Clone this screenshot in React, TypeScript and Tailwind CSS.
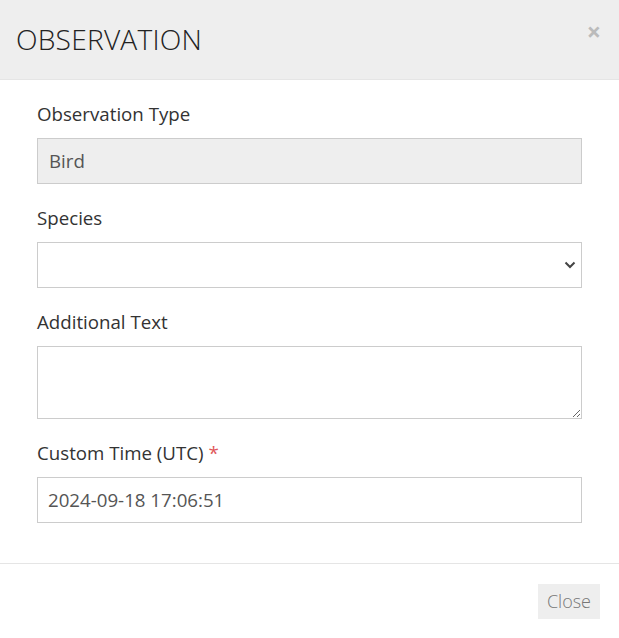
import React from "react";

const font = { fontFamily: '"Open Sans", "Liberation Sans", sans-serif' };

function Label({ children, required }: { children: React.ReactNode; required?: boolean }) {
  return (
    <label className="mb-[11px] block text-[18.7px] leading-[26px] text-[#333]">
      {children}
      {required && <span className="ml-[5px] text-[#e0575b]">*</span>}
    </label>
  );
}

export default function App() {
  return (
    <div className="h-[638px] w-[619px] bg-white text-[#333]" style={font}>
      <div className="flex h-[80px] items-start justify-between border-b border-[#e5e5e5] bg-[#eeeeee] pl-[16px] pr-[18px]">
        <h1 className="mt-[21px] text-[28.2px] font-light leading-[36px] tracking-[0.2px] text-[#222]">
          OBSERVATION
        </h1>
        <button className="mt-[17px] text-[25px] font-bold leading-[28px] text-[#bbbbbb]">×</button>
      </div>

      <div className="px-[37px] pb-[20px] pt-[21px]">
        <div className="mb-[21px]">
          <Label>Observation Type</Label>
          <div className="flex h-[46px] items-center border border-[#cccccc] bg-[#eeeeee] px-[11px] text-[18.7px] text-[#555]">
            Bird
          </div>
        </div>

        <div className="mb-[21px]">
          <Label>Species</Label>
          <div className="flex h-[46px] items-center justify-end border border-[#cccccc] bg-white pr-[5px]">
            <svg width="12" height="8" viewBox="0 0 12 8" fill="none">
              <path d="M1.5 1.5 L6 6 L10.5 1.5" stroke="#444" strokeWidth="2" />
            </svg>
          </div>
        </div>

        <div className="mb-[21px]">
          <Label>Additional Text</Label>
          <textarea className="block h-[73px] w-full border border-[#cccccc] bg-white px-[11px] py-[6px] text-[18.7px] text-[#555] outline-none" />
        </div>

        <div className="mb-[20px]">
          <Label required>Custom Time (UTC)</Label>
          <div className="flex h-[46px] items-center border border-[#cccccc] bg-white px-[10px] text-[18.7px] text-[#555]">
            2024-09-18 17:06:51
          </div>
        </div>
      </div>

      <div className="flex justify-end border-t border-[#e5e5e5] pr-[19px] pt-[20px]">
        <button className="h-[35px] bg-[#eeeeee] px-[9px] text-[18px] font-light leading-[35px] text-[#777]">
          Close
        </button>
      </div>
    </div>
  );
}
